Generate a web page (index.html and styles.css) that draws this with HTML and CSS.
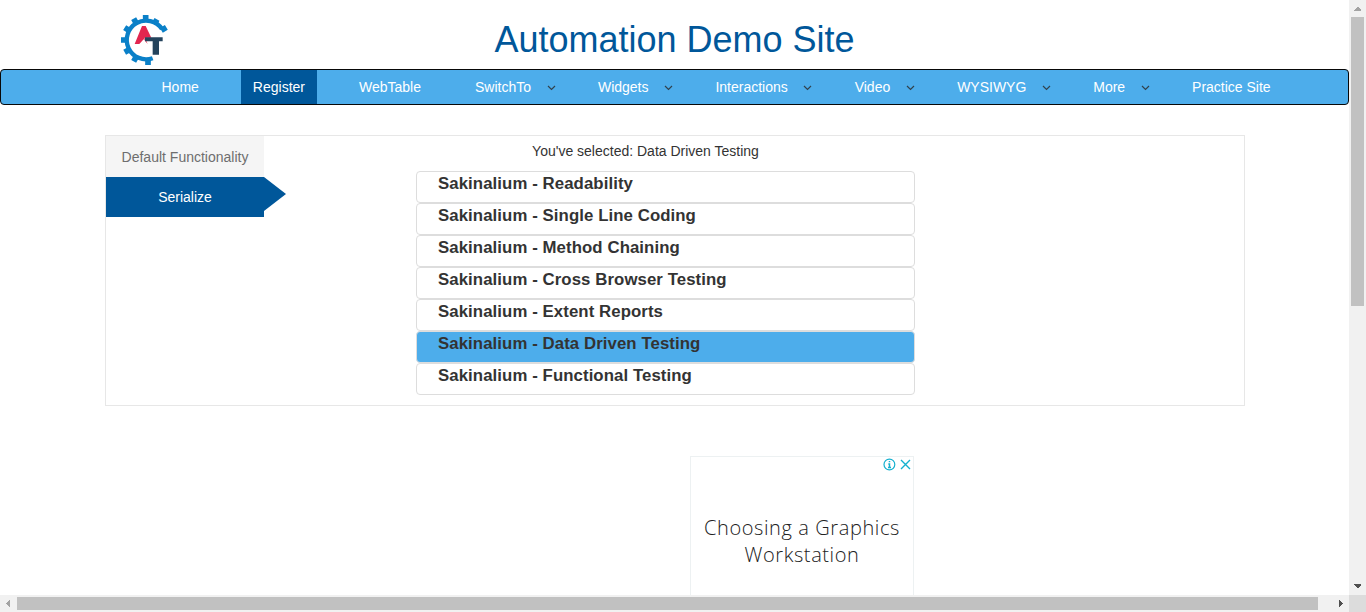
FILE: index.html
```html
<!DOCTYPE html>
<html lang="en">
<head>
<meta charset="utf-8">
<title>Register</title>
<link rel="stylesheet" href="styles.css">
</head>
<body>
<div class="screen">
  <div class="page">
    <header class="header">
      <svg class="logo" viewBox="60 27 144 156">
        <g fill="none" stroke="#0a80c8">
          <path stroke-width="13" d="M186 72A58 58 0 1 0 158 159.500"/>
          <path stroke-width="17" d="M137 49V30M110 57L101 41M90 78L74 68M82 105H63M90 133L74 142M110 153L101 169M144 160V180M163 57L171 43M184 76L199 67"/>
        </g>
        <path fill="#e2264f" d="M104 117L126 63H137L154 98H134V108H139L143 117L131 103L118 117Z"/>
        <path fill="#24435c" d="M135 97H188V109H177V149H158V109H135Z"/>
      </svg>
      <h1 class="title">Automation Demo Site</h1>
    </header>
    <nav class="nav">
      <a class="item">Home</a>
      <a class="item active">Register</a>
      <a class="item">WebTable</a>
      <a class="item">SwitchTo<svg class="chev" viewBox="0 0 9 6"><path d="M1 1L4.500 4.500L8 1"/></svg></a>
      <a class="item">Widgets<svg class="chev" viewBox="0 0 9 6"><path d="M1 1L4.500 4.500L8 1"/></svg></a>
      <a class="item">Interactions<svg class="chev" viewBox="0 0 9 6"><path d="M1 1L4.500 4.500L8 1"/></svg></a>
      <a class="item">Video<svg class="chev" viewBox="0 0 9 6"><path d="M1 1L4.500 4.500L8 1"/></svg></a>
      <a class="item">WYSIWYG<svg class="chev" viewBox="0 0 9 6"><path d="M1 1L4.500 4.500L8 1"/></svg></a>
      <a class="item">More<svg class="chev" viewBox="0 0 9 6"><path d="M1 1L4.500 4.500L8 1"/></svg></a>
      <a class="item">Practice Site</a>
    </nav>
    <main class="panel">
      <div class="tabs">
        <a class="tab">Default Functionality</a>
        <a class="tab current">Serialize</a>
      </div>
      <section class="content">
        <p class="feedback">You've selected: Data Driven Testing</p>
        <ul class="list">
          <li>Sakinalium - Readability</li>
          <li>Sakinalium - Single Line Coding</li>
          <li>Sakinalium - Method Chaining</li>
          <li>Sakinalium - Cross Browser Testing</li>
          <li>Sakinalium - Extent Reports</li>
          <li class="selected">Sakinalium - Data Driven Testing</li>
          <li>Sakinalium - Functional Testing</li>
        </ul>
      </section>
    </main>
    <aside class="ad">
      <svg class="adicons" viewBox="0 0 30 14">
        <g fill="none" stroke="#14b0cf" stroke-width="1.200">
          <circle cx="7.400" cy="7.500" r="5.400"/>
          <path stroke-width="1.500" d="M7.500 4V5.300M7.500 6.300V10.500M6.300 6.900H7.500M6 10.500H9"/>
          <path stroke-width="1.400" d="M19 3L28 12M28 3L19 12"/>
        </g>
      </svg>
      <p class="adtext">Choosing a Graphics<br>Workstation</p>
    </aside>
  </div>
  <div class="vbar">
    <svg class="arrow" viewBox="0 0 17 17"><path fill="#a3a3a3" d="M5 11V10L8.500 6.500L12 10V11Z"/></svg>
    <div class="vthumb"></div>
    <svg class="arrow end" viewBox="0 0 17 17"><path fill="#505050" d="M5 6H12V7L8.500 10.500L5 7Z"/></svg>
  </div>
  <div class="hbar">
    <svg class="arrow" viewBox="0 0 17 17"><path fill="#a3a3a3" d="M10 5V12L6 8.500Z"/></svg>
    <div class="hthumb"></div>
    <svg class="arrow end" viewBox="0 0 17 17"><path fill="#505050" d="M7 5V12L11 8.500Z"/></svg>
  </div>
  <div class="corner"></div>
</div>
</body>
</html>
```
FILE: styles.css
```css
* { box-sizing: border-box; }
body { margin: 0; background: #fff; color: #333; font: 14px/20px "Liberation Sans", Arial, sans-serif; overflow: hidden; }
.screen { display: grid; grid-template-columns: 1349px 17px; grid-template-rows: 595px 17px; width: 1366px; height: 612px; }
.page { overflow: hidden; }
.header { display: grid; grid-template-columns: 120px 48px 1fr 168px; height: 69px; }
.logo { grid-column: 2; width: 48px; height: 52px; margin-top: 14px; }
.title { margin: 20px 0 0; font-size: 36px; line-height: 40px; font-weight: 400; color: #00579a; text-align: center; white-space: nowrap; }
.nav { display: flex; gap: 30px; height: 36px; padding-left: 148.5px; border: 1px solid #080808; border-radius: 4px; background: #4dadeb; }
.item { display: flex; align-items: center; padding: 0 12px; color: #fff; white-space: nowrap; }
.item:has(.chev) { padding-right: .4px; }
.active { background: #00579a; }
.chev { width: 9px; height: 6px; margin: 1px 0 0 15.5px; fill: none; stroke: #31424d; stroke-width: 1.200; }
.panel { display: flex; width: 1140px; height: 271px; margin: 30px 0 0 105px; border: 1px solid #e7e7e7; }
.tabs { width: 158px; }
.tab { display: block; height: 41px; background: #f5f5f5; color: #6e6e6e; text-align: center; line-height: 42px; }
.current { position: relative; height: 40px; line-height: 40px; background: #00579a; color: #fff; }
.current::after { content: ""; position: absolute; left: 158px; top: 0; border: solid transparent; border-width: 17px 0 17px 22px; border-left-color: #00579a; }
.content { width: 499px; margin-left: 152px; }
.feedback { margin: 5px 0 10px; padding-right: 40px; text-align: center; }
.list { margin: 0; padding: 0; list-style: none; font-weight: 700; font-size: 16.8px; letter-spacing: .08px; }
.list li { height: 32px; padding-left: 21px; border: 1px solid #ddd; border-radius: 4px; line-height: 23px; }
.list .selected { background: #4dadeb; }
.ad { display: flex; flex-direction: column; width: 224px; height: 250px; margin: 50px 0 0 690px; border: 1px solid #edf1f2; }
.adicons { width: 30px; height: 14px; align-self: flex-end; margin-right: 1px; }
.adtext { margin: 43px 0 0; color: #222; font: 300 20px/27px "Open Sans", sans-serif; letter-spacing: .6px; text-align: center; white-space: nowrap; }
.vbar { display: flex; flex-direction: column; align-items: center; background: #f1f1f1; }
.hbar { display: flex; align-items: center; background: #f1f1f1; }
.arrow { width: 17px; height: 17px; flex: none; shape-rendering: crispEdges; }
.vbar .end { margin-top: auto; }
.hbar .end { margin-left: auto; }
.vthumb { width: 13px; height: 289px; background: #c1c1c1; }
.hthumb { width: 1301px; height: 13px; background: #c1c1c1; }
.corner { background: #dcdcdc; }
```
